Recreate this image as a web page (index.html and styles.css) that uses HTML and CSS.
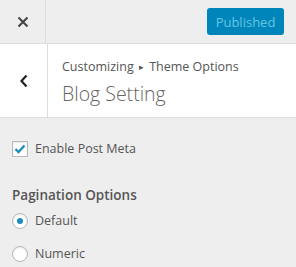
FILE: index.html
```html
<!DOCTYPE html>
<html lang="en">
<head>
    <meta charset="UTF-8">
    <title>Customizing Blog Setting</title>
    <link rel="stylesheet" href="styles.css">
</head>
<body>
    <div class="panel">
        <!-- Top bar -->
        <div class="topbar">
            <button class="close-btn" aria-label="Close">
                <svg width="12" height="12" viewBox="0 0 12 12"><path d="M1.5 1.5 L10.5 10.5 M10.5 1.5 L1.5 10.5" stroke="#444" stroke-width="2"/></svg>
            </button>
            <button class="publish-btn" disabled>Published</button>
        </div>

        <!-- Section header -->
        <div class="section-header">
            <button class="back-btn" aria-label="Back">
                <svg width="10" height="14" viewBox="0 0 10 14"><path d="M7.5 1.5 L2.5 7 L7.5 12.5" fill="none" stroke="#222" stroke-width="2.2"/></svg>
            </button>
            <div class="section-title">
                <div class="breadcrumb">Customizing <span class="arrow">&#9656;</span> Theme Options</div>
                <div class="title">Blog Setting</div>
            </div>
        </div>

        <!-- Controls -->
        <div class="controls">
            <label class="check-row">
                <span class="checkbox">
                    <svg width="14" height="14" viewBox="0 0 14 14"><path d="M2.5 7 L5.5 10 L11.5 3.5" fill="none" stroke="#1e8cbe" stroke-width="2.4"/></svg>
                </span>
                Enable Post Meta
            </label>

            <div class="group-title">Pagination Options</div>
            <label class="radio-row">
                <span class="radio checked"></span>
                Default
            </label>
            <label class="radio-row">
                <span class="radio"></span>
                Numeric
            </label>
        </div>
    </div>
</body>
</html>
```

FILE: styles.css
```css
body {
    margin: 0;
    padding: 0;
    background-color: #eee;
    font-family: "Open Sans", "Noto Sans", sans-serif;
    color: #444;
}

.panel {
    width: 296px;
}

.topbar {
    display: flex;
    align-items: center;
    justify-content: space-between;
    height: 43px;
    border-bottom: 1px solid #ddd;
    background-color: #eee;
}

.close-btn {
    width: 46px;
    height: 43px;
    border: none;
    border-right: 1px solid #ddd;
    background: transparent;
    display: flex;
    align-items: center;
    justify-content: center;
    padding: 0;
}

.publish-btn {
    margin-right: 12px;
    width: 77px;
    height: 27px;
    border: none;
    border-radius: 3px;
    background-color: #0085ba;
    color: #66c6e4;
    font-family: "Open Sans", "Noto Sans", sans-serif;
    font-size: 13px;
    padding: 0;
}

.section-header {
    display: flex;
    height: 73px;
    background-color: #fff;
    border-bottom: 1px solid #ddd;
}

.back-btn {
    width: 48px;
    border: none;
    border-right: 1px solid #ddd;
    background: transparent;
    display: flex;
    align-items: center;
    justify-content: center;
    padding: 0;
}

.section-title {
    padding: 14px 0 0 14px;
}

.breadcrumb {
    font-size: 12.5px;
    color: #555;
    line-height: 18px;
}

.arrow {
    font-size: 9px;
    position: relative;
    top: -1px;
    padding: 0 2px;
}

.title {
    font-size: 19.5px;
    font-weight: 300;
    color: #666;
    line-height: 28px;
    margin-top: 3px;
}

.controls {
    padding: 22px 12px 0 12px;
}

.check-row,
.radio-row {
    display: flex;
    align-items: center;
    gap: 7px;
    font-size: 12.5px;
    line-height: 18px;
    color: #555;
}

.checkbox {
    width: 14px;
    height: 14px;
    border: 1px solid #b4b9be;
    background-color: #fff;
    box-shadow: inset 0 1px 2px rgba(0, 0, 0, 0.1);
    display: flex;
    align-items: center;
    justify-content: center;
}

.group-title {
    margin-top: 27px;
    font-size: 13.5px;
    line-height: 20px;
    font-weight: 600;
    color: #555;
}

.radio-row {
    margin-top: 7px;
}

.radio-row + .radio-row {
    margin-top: 15px;
}

.radio {
    width: 14px;
    height: 14px;
    border: 1px solid #b4b9be;
    border-radius: 50%;
    background-color: #fff;
    box-shadow: inset 0 1px 2px rgba(0, 0, 0, 0.1);
    display: flex;
    align-items: center;
    justify-content: center;
}

.radio.checked::after {
    content: '';
    width: 6px;
    height: 6px;
    border-radius: 50%;
    background-color: #1e8cbe;
}
```
